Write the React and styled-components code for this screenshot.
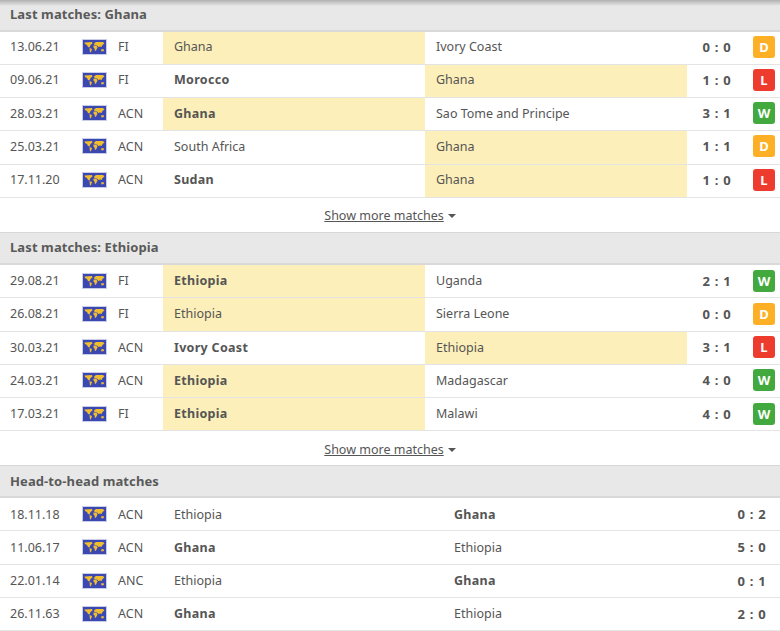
import React from "react";
import styled, { createGlobalStyle } from "styled-components";

const GlobalStyle = createGlobalStyle`
  html, body {
    margin: 0;
    padding: 0;
    background: #fff;
    font-family: "Noto Sans", "Open Sans", sans-serif;
    color: #555;
    overflow: hidden;
  }
`;

const Page = styled.div`
  width: 780px;
  height: 631px;
  overflow: hidden;
  position: relative;
`;

const TopShade = styled.div`
  position: absolute;
  top: 0;
  left: 0;
  right: 0;
  height: 6px;
  background: linear-gradient(#b0b0b0, rgba(230, 230, 230, 0));
`;

const SectionTitle = styled.div`
  height: ${(p) => p.$h || 32.75}px;
  box-sizing: border-box;
  background: #e8e8e8;
  border-top: ${(p) => (p.$first ? "0" : "1px solid #d8d8d8")};
  border-bottom: 2px solid #d9d9d9;
  padding: 0 10px 1px;
  display: flex;
  align-items: center;
  font-size: 13px;
  font-weight: 700;
  letter-spacing: 0.1px;
  color: #5a5a5a;
`;

const Row = styled.div`
  --lift: ${(p) => p.$lift ?? 1}px;
  display: grid;
  grid-template-columns: 82px 36px 45px ${(p) => (p.$wide ? "280px 262px 94px" : "262px 262px 60px")} 1fr;
  align-items: stretch;
  height: 33.25px;
  box-sizing: border-box;
  border-bottom: 1px solid #e4e4e4;
  font-size: 12.5px;
`;

const Cell = styled.div`
  display: flex;
  align-items: center;
  box-sizing: border-box;
  padding: 0 0 var(--lift) ${(p) => p.$pad || 0}px;
  white-space: nowrap;
`;

const Team = styled(Cell)`
  padding-left: 11px;
  font-weight: ${(p) => (p.$bold ? 700 : 400)};
  letter-spacing: ${(p) => (p.$bold ? 0.3 : 0)}px;
  background: ${(p) => (p.$mark ? "#fcefb9" : "transparent")};
`;

const Score = styled(Cell)`
  justify-content: center;
  font-size: 13px;
  font-weight: 700;
  letter-spacing: 0.7px;
`;

const Badge = styled.span`
  width: 22px;
  height: 22px;
  margin-left: 6px;
  border-radius: 3px;
  display: flex;
  align-items: center;
  justify-content: center;
  color: #fff;
  font-size: 13px;
  font-weight: 700;
  background: ${(p) => ({ D: "#fdaf26", L: "#ed3b2e", W: "#41a93e" }[p.$r])};
`;

const More = styled.div`
  height: 34px;
  box-sizing: border-box;
  padding-top: ${(p) => p.$top}px;
  display: flex;
  align-items: center;
  justify-content: center;
  font-size: 12.5px;
  gap: 4px;
  a {
    color: #555;
    text-decoration: underline;
  }
`;

const Caret = styled.i`
  width: 0;
  height: 0;
  margin-top: 1px;
  border-left: 4.5px solid transparent;
  border-right: 4.5px solid transparent;
  border-top: 4px solid #555;
`;

const FlagIcon = styled.svg`
  display: block;
`;

const Flag = () => (
  <FlagIcon width="25" height="16" viewBox="0 0 25 16">
    <rect x="0.5" y="0.5" width="24" height="15" fill="#3c48b2" stroke="#c9cdea" />
    <path
      fill="#f0bd2e"
      d="M2.500 3.500L10 3l.5 1.500L8.500 6l-1 2.500L6 8 5 6 3 5zM7.500 9l2.500 1-1 3-1 .5zM12 4.500L14 3h7l1.500 1.500-2 1.500-1 2-1.500-.5L16.500 8 15 6.500 12.500 6zM11.500 6.500l3 .3 1 1.700-1.500 3-1 .5-.5-2.500-1-1zM19 10.500l2.500-.5.5 2-2.500.5z"
    />
  </FlagIcon>
);

const ghana = [
  ["13.06.21", "FI", "Ghana", "Ivory Coast", "0 : 0", "D", 1, false],
  ["09.06.21", "FI", "Morocco", "Ghana", "1 : 0", "L", 2, true],
  ["28.03.21", "ACN", "Ghana", "Sao Tome and Principe", "3 : 1", "W", 1, true],
  ["25.03.21", "ACN", "South Africa", "Ghana", "1 : 1", "D", 2, false],
  ["17.11.20", "ACN", "Sudan", "Ghana", "1 : 0", "L", 2, true],
];

const ethiopia = [
  ["29.08.21", "FI", "Ethiopia", "Uganda", "2 : 1", "W", 1, true],
  ["26.08.21", "FI", "Ethiopia", "Sierra Leone", "0 : 0", "D", 1, false],
  ["30.03.21", "ACN", "Ivory Coast", "Ethiopia", "3 : 1", "L", 2, true],
  ["24.03.21", "ACN", "Ethiopia", "Madagascar", "4 : 0", "W", 1, true],
  ["17.03.21", "FI", "Ethiopia", "Malawi", "4 : 0", "W", 1, true],
];

const h2h = [
  ["18.11.18", "ACN", "Ethiopia", "Ghana", "0 : 2", 2],
  ["11.06.17", "ACN", "Ghana", "Ethiopia", "5 : 0", 1],
  ["22.01.14", "ANC", "Ethiopia", "Ghana", "0 : 1", 2],
  ["26.11.63", "ACN", "Ghana", "Ethiopia", "2 : 0", 1],
];

const MatchRows = ({ rows, lift }) =>
  rows.map(([date, comp, a, b, score, res, mark, bold]) => (
    <Row key={date} $lift={lift}>
      <Cell $pad={10}>{date}</Cell>
      <Cell><Flag /></Cell>
      <Cell>{comp}</Cell>
      <Team $mark={mark === 1} $bold={bold}>{a}</Team>
      <Team $mark={mark === 2}>{b}</Team>
      <Score>{score}</Score>
      <Cell><Badge $r={res}>{res}</Badge></Cell>
    </Row>
  ));

const ShowMore = ({ top }) => (
  <More $top={top}>
    <a>Show more matches</a>
    <Caret />
  </More>
);

export default function App() {
  return (
    <Page>
      <GlobalStyle />
      <TopShade />
      <SectionTitle $first $h={31.5}>Last matches: Ghana</SectionTitle>
      <MatchRows rows={ghana} lift={2} />
      <ShowMore top={1} />
      <SectionTitle $h={33.25}>Last matches: Ethiopia</SectionTitle>
      <MatchRows rows={ethiopia} />
      <ShowMore top={2} />
      <SectionTitle>Head-to-head matches</SectionTitle>
      {h2h.map(([date, comp, a, b, score, win]) => (
        <Row key={date} $wide $lift={0}>
          <Cell $pad={10}>{date}</Cell>
          <Cell><Flag /></Cell>
          <Cell>{comp}</Cell>
          <Team $bold={win === 1}>{a}</Team>
          <Team $bold={win === 2}>{b}</Team>
          <Score>{score}</Score>
          <Cell />
        </Row>
      ))}
    </Page>
  );
}
